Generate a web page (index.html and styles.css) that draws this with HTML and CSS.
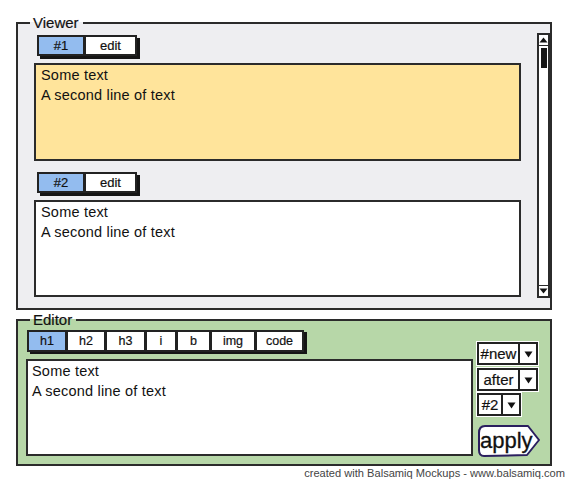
FILE: index.html
```html
<!DOCTYPE html>
<html>
<head>
<meta charset="utf-8">
<link rel="stylesheet" href="styles.css">
</head>
<body>
<div class="page">
  <fieldset class="panel viewer">
    <legend>Viewer</legend>
    <div class="viewer-body">
      <div class="docs">
        <div class="doc">
          <div class="tabs"><span class="tab tab-id active">#1</span><span class="tab tab-edit">edit</span></div>
          <div class="box box-yellow">Some text<br>A second line of text</div>
        </div>
        <div class="doc doc-second">
          <div class="tabs"><span class="tab tab-id active">#2</span><span class="tab tab-edit">edit</span></div>
          <div class="box box-white">Some text<br>A second line of text</div>
        </div>
      </div>
      <div class="scrollbar">
        <div class="sb-btn"><svg width="9" height="6" viewBox="0 0 9 6"><path d="M0.5 5.5 L4.5 0.5 L8.5 5.5 Z" fill="#111"/></svg></div>
        <div class="sb-track"><div class="sb-thumb"></div></div>
        <div class="sb-btn"><svg width="9" height="6" viewBox="0 0 9 6"><path d="M0.5 0.5 L4.5 5.5 L8.5 0.5 Z" fill="#111"/></svg></div>
      </div>
    </div>
  </fieldset>

  <fieldset class="panel editor">
    <legend>Editor</legend>
    <div class="editor-body">
      <div class="editor-main">
        <div class="tabs tool-tabs">
          <span class="tab tool active w-h1">h1</span><span class="tab tool w-h2">h2</span><span class="tab tool w-h3">h3</span><span class="tab tool w-i">i</span><span class="tab tool w-b">b</span><span class="tab tool w-img">img</span><span class="tab tool w-code">code</span>
        </div>
        <div class="box box-edit">Some text<br>A second line of text</div>
      </div>
      <div class="editor-side">
        <div class="dropdown dd-wide"><span class="dd-label">#new</span><span class="dd-arrow"><svg width="9" height="7" viewBox="0 0 9 7"><path d="M0.5 0.5 L4.5 6.5 L8.5 0.5 Z" fill="#111"/></svg></span></div>
        <div class="dropdown dd-wide"><span class="dd-label">after</span><span class="dd-arrow"><svg width="9" height="7" viewBox="0 0 9 7"><path d="M0.5 0.5 L4.5 6.5 L8.5 0.5 Z" fill="#111"/></svg></span></div>
        <div class="dropdown dd-narrow"><span class="dd-label">#2</span><span class="dd-arrow"><svg width="9" height="7" viewBox="0 0 9 7"><path d="M0.5 0.5 L4.5 6.5 L8.5 0.5 Z" fill="#111"/></svg></span></div>
        <div class="apply">
          <svg class="apply-shape" width="64" height="34" viewBox="0 0 64 34"><path d="M8 2 L51 2 L62 16 L50 31 L7 32 Q2 32 2 26 L2 9 Q2 2 8 2 Z" fill="#fff" stroke="#2b1f5f" stroke-width="2" stroke-linejoin="round"/></svg>
          <span class="apply-label">apply</span>
        </div>
      </div>
    </div>
  </fieldset>

  <div class="credit">created with Balsamiq Mockups - www.balsamiq.com</div>
</div>
</body>
</html>
```

FILE: styles.css
```css
html, body {
  margin: 0;
  padding: 0;
  background: #ffffff;
}

body {
  font-family: "Liberation Sans", Arial, sans-serif;
  color: #111;
}

.page {
  padding: 14px 0 0 16px;
  width: 553px;
}

.panel {
  margin: 0;
  padding: 0;
  width: 536px;
  box-sizing: border-box;
  border: 2px solid #2b2b2b;
  min-inline-size: 0;
}

.panel legend {
  margin-left: 12px;
  padding: 0 4px 0 3px;
  font-size: 15px;
  line-height: 18px;
  color: #111;
  -webkit-text-stroke: 0.2px #111;
}

.viewer {
  background: #eeeef1;
}

.viewer-body {
  display: grid;
  grid-template-columns: 487px 13px;
  column-gap: 16px;
  padding: 1px 0 10px 16px;
}

.docs {
  display: flex;
  flex-direction: column;
  padding-top: 2px;
}

.doc-second {
  margin-top: 11px;
}

.tabs {
  display: flex;
  align-self: flex-start;
  margin-left: 3px;
  box-shadow: 3px 3px 0 #151515;
  width: max-content;
}

.tab {
  display: flex;
  align-items: center;
  justify-content: center;
  height: 21px;
  box-sizing: border-box;
  border: 2px solid #222;
  background: #fff;
  font-size: 13px;
  color: #111;
  -webkit-text-stroke: 0.2px #111;
}

.tab + .tab {
  border-left-width: 1px;
}

.tab.active {
  background: #93bcef;
}

.tab-id { width: 48px; }
.tab-edit { width: 52px; }

.box {
  box-sizing: border-box;
  border: 2px solid #2b2b2b;
  background: #fff;
  font-size: 14.5px;
  line-height: 20px;
  letter-spacing: 0.2px;
  padding: 0 5px;
  color: #111;
}

.doc .box {
  margin-top: 7px;
}

.box-yellow {
  background: #ffe49b;
  height: 98px;
}

.box-white {
  height: 97px;
}

.scrollbar {
  display: flex;
  flex-direction: column;
  height: 265px;
  box-sizing: border-box;
  border: 2px solid #2b2b2b;
  background: #fff;
}

.sb-btn {
  height: 10px;
  display: flex;
  align-items: center;
  justify-content: center;
  border-bottom: 1px solid #2b2b2b;
}

.sb-btn:last-child {
  border-bottom: 0;
  border-top: 1px solid #2b2b2b;
}

.sb-track {
  flex: 1;
  padding: 2px 0 0 2px;
}

.sb-thumb {
  width: 6px;
  height: 20px;
  background: #151515;
}

/* Editor */
.editor {
  margin-top: 1px;
  background: #b7d7a8;
}

.editor-body {
  display: flex;
  gap: 4px;
  padding: 0 0 6px 8px;
}

.editor-main {
  display: flex;
  flex-direction: column;
  width: 447px;
}

.tool-tabs {
  margin: 1px 0 0 1px;
  box-shadow: 3px 2px 0 #151515;
}

.tool {
  height: 22px;
  font-size: 12.5px;
}

.w-h1 { width: 40px; }
.w-h2 { width: 39px; }
.w-h3 { width: 40px; }
.w-i { width: 31px; }
.w-b { width: 34px; }
.w-img { width: 45px; }
.w-code { width: 48px; }

.box-edit {
  margin-top: 7px;
  height: 97px;
  padding: 0 4px;
  line-height: 20px;
}

.editor-side {
  display: flex;
  flex-direction: column;
  align-items: flex-start;
  padding-top: 13px;
  gap: 3px;
}

.dropdown {
  display: flex;
  height: 23px;
  box-sizing: border-box;
  border: 2px solid #222;
  background: #fff;
  font-size: 15px;
  box-shadow: 0 0 0 1px #fff;
  -webkit-text-stroke: 0.2px #111;
}

.dd-wide { width: 61px; }
.dd-narrow { width: 44px; margin-top: -1px; }

.dd-label {
  flex: 1;
  display: flex;
  align-items: center;
  justify-content: center;
  line-height: 18px;
}

.dd-arrow {
  width: 16px;
  display: flex;
  align-items: center;
  justify-content: center;
  border-left: 2px solid #222;
  padding-top: 1px;
}

.apply {
  position: relative;
  width: 64px;
  height: 34px;
  margin-top: 5px;
  display: flex;
  align-items: center;
  justify-content: flex-start;
}

.apply-shape {
  position: absolute;
  left: 0;
  top: 0;
}

.apply-label {
  position: relative;
  font-size: 22px;
  line-height: 26px;
  padding-left: 3px;
  color: #111;
  -webkit-text-stroke: 0.3px #111;
}

.credit {
  text-align: right;
  font-size: 11.1px;
  line-height: 12px;
  color: #444;
  padding-right: 4px;
  margin-top: 1px;
}
```
